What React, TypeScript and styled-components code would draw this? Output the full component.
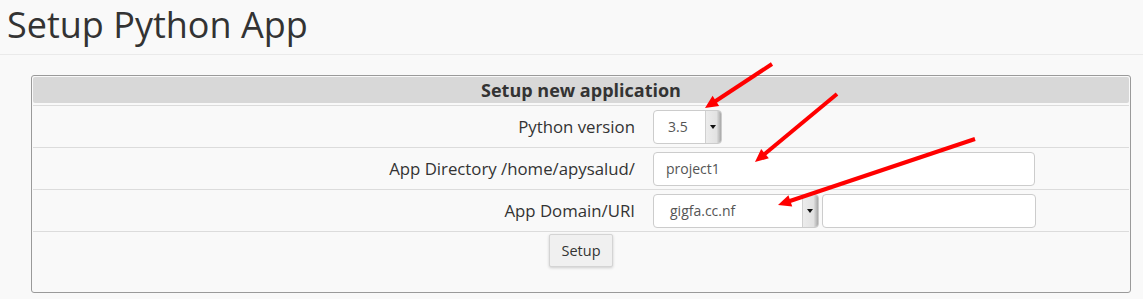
import React from "react";
import styled, { createGlobalStyle } from "styled-components";

const Global = createGlobalStyle`
  html, body { margin: 0; padding: 0; background: #f9f9f9; }
  body { font-family: "Open Sans", "Liberation Sans", sans-serif; color: #333; }
  * { box-sizing: border-box; }
`;

const Page = styled.div`
  position: relative;
  width: 1143px;
  height: 299px;
  overflow: hidden;
`;

const TitleBar = styled.div`
  height: 55px;
  border-bottom: 1px solid #eaeaea;
  padding-left: 7px;
`;

const Title = styled.h1`
  margin: 0;
  font-size: 36px;
  font-weight: 400;
  line-height: 50px;
  color: #333;
`;

const Panel = styled.div`
  margin: 20px 12px 0 31px;
  border: 1px solid #9a9a9a;
  border-radius: 3px;
  padding: 1px;
  height: 218px;
  display: flex;
  flex-direction: column;
`;

const Header = styled.div`
  height: 26px;
  background: #d8d8d8;
  border-radius: 2px;
  text-align: center;
  font-weight: 700;
  font-size: 18px;
  line-height: 27px;
  color: #333;
  margin-bottom: 2px;
`;

const Row = styled.div`
  display: grid;
  grid-template-columns: 611px 1fr;
  height: 42px;
  border-top: 1px solid #dcdcdc;
  align-items: center;
`;

const Label = styled.div`
  text-align: right;
  padding-right: 9px;
  font-size: 16.8px;
`;

const Cell = styled.div`
  display: flex;
  align-items: center;
  gap: 3px;
  padding-left: 9px;
`;

const SelectBox = styled.div<{ $w: number }>`
  width: ${(p) => p.$w}px;
  height: 34px;
  background: #fff;
  border: 1px solid #ccc;
  border-radius: 4px;
  display: flex;
  align-items: stretch;
  overflow: hidden;
`;

const SelectText = styled.div<{ $pad: number }>`
  flex: 1;
  padding-left: ${(p) => p.$pad}px;
  font-size: 14px;
  line-height: 32px;
  color: #555;
`;

const Arrow = styled.div`
  width: 16px;
  background: linear-gradient(to right, #ececec 0%, #e2e2e2 70%, #a8a8a8 100%);
  border-left: 1px solid #d0d0d0;
  display: flex;
  align-items: center;
  justify-content: center;
  padding-right: 2px;
  &::after {
    content: "";
    border-left: 3px solid transparent;
    border-right: 3px solid transparent;
    border-top: 4px solid #111;
  }
`;

const TextInput = styled.div<{ $w: number }>`
  width: ${(p) => p.$w}px;
  height: 34px;
  background: #fff;
  border: 1px solid #ccc;
  border-radius: 4px;
  padding-left: 12px;
  font-size: 14px;
  line-height: 32px;
  color: #555;
`;

const ButtonRow = styled.div`
  border-top: 1px solid #dcdcdc;
  flex: 1;
  display: flex;
  justify-content: center;
  padding-top: 2px;
  align-items: flex-start;
`;

const Button = styled.button`
  width: 64px;
  height: 33px;
  font-family: inherit;
  font-size: 14.5px;
  color: #333;
  background: #f0f0f0;
  border: 1px solid #d4d4d4;
  border-radius: 2px;
  box-shadow: 0 1px 3px rgba(0, 0, 0, 0.18);
  padding: 0;
`;

const Overlay = styled.svg`
  position: absolute;
  left: 0;
  top: 0;
  pointer-events: none;
`;

const arrows = [
  { x1: 772, y1: 64, x2: 705, y2: 108 },
  { x1: 837, y1: 94, x2: 755, y2: 162 },
  { x1: 975, y1: 139, x2: 778, y2: 205 },
];

function ArrowMark({ x1, y1, x2, y2 }: { x1: number; y1: number; x2: number; y2: number }) {
  const dx = x2 - x1;
  const dy = y2 - y1;
  const len = Math.hypot(dx, dy);
  const ux = dx / len;
  const uy = dy / len;
  const head = 13;
  const half = 6;
  const bx = x2 - ux * head;
  const by = y2 - uy * head;
  const px = -uy;
  const py = ux;
  const pts = `${x2},${y2} ${bx + px * half},${by + py * half} ${bx - px * half},${by - py * half}`;
  return (
    <g>
      <line x1={x1} y1={y1} x2={bx + ux * 2} y2={by + uy * 2} stroke="#ff0000" strokeWidth={4} />
      <polygon points={pts} fill="#ff0000" />
    </g>
  );
}

export default function App() {
  return (
    <Page>
      <Global />
      <TitleBar>
        <Title>Setup Python App</Title>
      </TitleBar>
      <Panel>
        <Header>Setup new application</Header>
        <Row>
          <Label>Python version</Label>
          <Cell>
            <SelectBox $w={69}>
              <SelectText $pad={14}>3.5</SelectText>
              <Arrow />
            </SelectBox>
          </Cell>
        </Row>
        <Row>
          <Label>App Directory /home/apysalud/</Label>
          <Cell>
            <TextInput $w={382}>project1</TextInput>
          </Cell>
        </Row>
        <Row>
          <Label>App Domain/URI</Label>
          <Cell>
            <SelectBox $w={166}>
              <SelectText $pad={16}>gigfa.cc.nf</SelectText>
              <Arrow />
            </SelectBox>
            <TextInput $w={214} />
          </Cell>
        </Row>
        <ButtonRow>
          <Button>Setup</Button>
        </ButtonRow>
      </Panel>
      <Overlay width={1143} height={299}>
        {arrows.map((a, i) => (
          <ArrowMark key={i} {...a} />
        ))}
      </Overlay>
    </Page>
  );
}
